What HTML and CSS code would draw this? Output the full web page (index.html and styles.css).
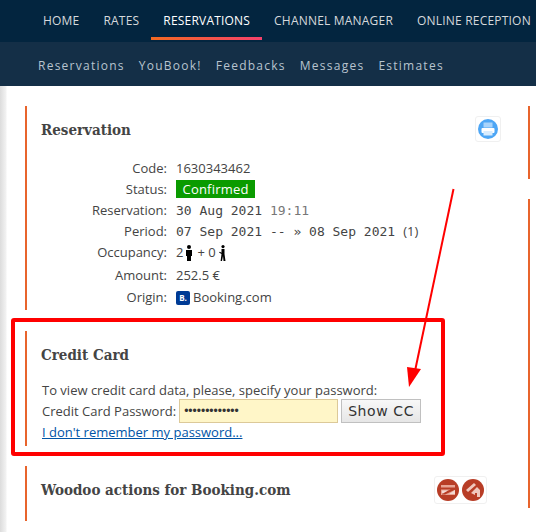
FILE: index.html
```html
<!DOCTYPE html>
<html lang="en">
<head>
    <meta charset="UTF-8">
    <meta name="viewport" content="width=device-width, initial-scale=1.0">
    <title>Reservation</title>
    <link rel="stylesheet" href="styles.css">
</head>
<body>
    <!-- Main menu -->
    <nav class="main-nav">
        <a href="#">HOME</a>
        <a href="#">RATES</a>
        <a href="#" class="active">RESERVATIONS</a>
        <a href="#">CHANNEL MANAGER</a>
        <a href="#">ONLINE RECEPTION</a>
    </nav>
    <nav class="sub-nav">
        <a href="#">Reservations</a>
        <a href="#">YouBook!</a>
        <a href="#">Feedbacks</a>
        <a href="#">Messages</a>
        <a href="#">Estimates</a>
    </nav>

    <div class="content">
        <div class="left-col">
            <section class="panel panel-reservation">
                <div class="panel-head">
                    <h2>Reservation</h2>
                    <span class="icon-box">
                        <svg width="22" height="22" viewBox="0 0 22 22">
                            <circle cx="11" cy="11" r="10" fill="#4da6f5"/>
                            <rect x="6.5" y="4.5" width="9" height="5" fill="#a9d4fb"/>
                            <rect x="4.5" y="10" width="13" height="5" rx="1" fill="#fff"/>
                            <rect x="6.5" y="13" width="9" height="4.5" fill="#d8ecfd"/>
                        </svg>
                    </span>
                </div>
                <div class="details">
                    <span class="label">Code:</span><span>1630343462</span>
                    <span class="label">Status:</span><span><span class="status">Confirmed</span></span>
                    <span class="label">Reservation:</span><span class="mono">30 Aug 2021 <span class="time">19:11</span></span>
                    <span class="label">Period:</span><span><span class="mono">07 Sep 2021 -- » 08 Sep 2021</span><span class="nights">(1)</span></span>
                    <span class="label">Occupancy:</span>
                    <span class="occupancy">2
                        <svg width="8" height="16" viewBox="0 0 8 16"><circle cx="4" cy="2" r="2"/><path d="M1 5h6v6H6v5H2v-5H1z"/></svg>
                        + 0
                        <svg width="8" height="16" viewBox="0 0 8 16"><circle cx="5" cy="1.6" r="1.6"/><path d="M3.5 4h3v5l1 7H5.5L5 11l-1 5H2.6l.9-7L1 7.5l.8-.8 1.7 1z"/></svg>
                    </span>
                    <span class="label row-gap">Amount:</span><span class="row-gap">252.5 €</span>
                    <span class="label row-gap-origin">Origin:</span>
                    <span class="origin"><span class="booking-logo">B.</span>Booking.com</span>
                </div>
            </section>

            <section class="panel panel-card">
                <h2>Credit Card</h2>
                <p>To view credit card data, please, specify your password:</p>
                <form class="cc-form">
                    <label for="cc-pass">Credit Card Password:</label>
                    <input type="password" id="cc-pass" value="1234567890123">
                    <button type="button">Show CC</button>
                </form>
                <a href="#" class="forgot">I don't remember my password...</a>
            </section>

            <section class="panel panel-woodoo">
                <div class="panel-head">
                    <h2>Woodoo actions for Booking.com</h2>
                    <span class="icon-box icon-box-wide">
                        <svg width="22" height="22" viewBox="0 0 22 22">
                            <circle cx="11" cy="11" r="11" fill="#b83d26"/>
                            <path d="M4 6h14v10H4z" fill="#e8a494"/>
                            <path d="M4 8.5h14v2H4zM5 14l10-4h3v.8L8 15.5H5z" fill="#b83d26"/>
                            <path d="M5 11.5h6l-5 3H5zM18 11v4h-6z" fill="#f3d9d2"/>
                        </svg>
                        <svg width="22" height="22" viewBox="0 0 22 22">
                            <circle cx="11" cy="11" r="11" fill="#b83d26"/>
                            <path d="M4 11l8-7 2 2-8 7zM9 14l6-6 3 3v7h-3v-4h-2v2z" fill="#f0c8be"/>
                        </svg>
                    </span>
                </div>
            </section>
        </div>

        <div class="right-col">
            <div class="rule rule-short"></div>
            <div class="rule rule-long"></div>
        </div>

        <!-- Annotations on top of the screenshot -->
        <div class="highlight"></div>
        <svg class="arrow" width="60" height="210" viewBox="0 0 60 210">
            <line x1="47.5" y1="3" x2="9" y2="185" stroke="#f00" stroke-width="2"/>
            <path d="M1 181L15 183L3 201z" fill="#f00"/>
        </svg>
    </div>
</body>
</html>
```

FILE: styles.css
```css
* {
    box-sizing: border-box;
    margin: 0;
    padding: 0;
}
body {
    margin: 0;
    font-family: "Open Sans", sans-serif;
    font-size: 13px;
    color: #444;
    background-color: white;
    overflow: hidden;
}
a {
    text-decoration: none;
}

/* menus */
.main-nav {
    display: flex;
    height: 42px;
    padding-left: 31px;
    background-color: #03253f;
    white-space: nowrap;
}
.main-nav a {
    height: 40px;
    padding: 12px 12px 0;
    font-size: 12px;
    letter-spacing: 0.2px;
    line-height: 17px;
    color: #d6d9dc;
}
.main-nav a.active {
    color: white;
    border-bottom: 3px solid;
    border-image: linear-gradient(to right, #f26a21, #f4416c) 1;
}
.sub-nav {
    display: flex;
    gap: 14px;
    height: 44px;
    padding: 2px 0 0 38px;
    align-items: center;
    background-color: #142f47;
}
.sub-nav a {
    font-size: 12px;
    letter-spacing: 1.25px;
    color: #b8c4cf;
}

/* page */
.content {
    position: relative;
    display: flex;
    height: 446px;
    padding: 20px 0 0 25px;
    background: linear-gradient(to right, #dcdcdc, #f2f2f2 6px, white 7px);
}
.left-col {
    width: 503px;
}
.right-col {
    width: 2px;
}
.rule {
    width: 2px;
    background-color: #e8642c;
}
.rule-short {
    height: 73px;
    margin-bottom: 20px;
}
.rule-long {
    height: 309px;
}
.panel {
    border-left: 2px solid #e8642c;
    padding-left: 14px;
}
.panel h2 {
    font-family: "DejaVu Serif Condensed", "DejaVu Serif", serif;
    font-size: 15px;
    font-weight: bold;
    color: #444;
}
.panel-reservation {
    height: 204px;
    margin-bottom: 21px;
    padding-top: 15px;
}
.panel-card {
    height: 115px;
    margin-bottom: 20px;
    padding-top: 15px;
}
.panel-woodoo {
    height: 55px;
    padding-top: 15px;
}
.panel-head {
    display: flex;
    justify-content: space-between;
    align-items: flex-start;
    padding-right: 27px;
}
.panel-woodoo .panel-head {
    padding-right: 41px;
}
.icon-box {
    display: flex;
    gap: 3px;
    padding: 1px;
    border: 1px solid #f0f0f0;
    border-radius: 3px;
    margin-top: -5px;
}
.icon-box-wide {
    padding: 2px;
}

/* reservation details */
.details {
    display: grid;
    grid-template-columns: 126px 1fr;
    column-gap: 9px;
    grid-auto-rows: 21px;
    margin-top: 16px;
    line-height: 21px;
    white-space: nowrap;
}
.label {
    text-align: right;
}
.mono {
    font-family: "DejaVu Sans Mono", monospace;
    font-size: 13px;
}
.time {
    color: #777;
}
.nights {
    margin-left: 8px;
    font-size: 13px;
}
.status {
    display: inline-block;
    height: 18px;
    padding: 0 6.5px;
    line-height: 18px;
    letter-spacing: 0.2px;
    color: white;
    background-color: #0a9b00;
}
.occupancy {
    display: flex;
    align-items: center;
    gap: 2px;
    color: #444;
}
.occupancy svg {
    margin-right: 2px;
}
.row-gap {
    position: relative;
    top: 2px;
}
.row-gap-origin {
    position: relative;
    top: 3px;
}
.origin {
    display: flex;
    align-items: center;
    gap: 3px;
    position: relative;
    top: 3px;
}
.booking-logo {
    width: 14px;
    height: 14px;
    border-radius: 2px;
    background-color: #003b95;
    color: white;
    font-size: 8px;
    font-weight: bold;
    line-height: 14px;
    text-align: center;
}

/* credit card */
.panel-card p {
    margin: 17px 0 0 1px;
    line-height: 18px;
}
.cc-form {
    display: flex;
    align-items: center;
    height: 24px;
    margin-left: 1px;
}
.cc-form input {
    width: 159px;
    height: 24px;
    margin-left: 3px;
    padding: 0 4px;
    border: 1px solid #dcc999;
    background-color: #fff6c8;
    font-size: 12px;
    color: #333;
}
.cc-form button {
    width: 80px;
    height: 24px;
    margin-left: 3px;
    border: 1px solid #c0c0c0;
    background: linear-gradient(#f8f8f8, #e6e6e6);
    font-family: "DejaVu Sans", sans-serif;
    font-size: 14px;
    letter-spacing: 0.6px;
    color: #333;
}
.forgot {
    display: block;
    margin-left: 1px;
    line-height: 18px;
    color: #0054a6;
    text-decoration: underline;
}

/* annotations */
.highlight {
    position: absolute;
    left: 11px;
    top: 232px;
    width: 434px;
    height: 138px;
    border: 4px solid #f00;
    border-radius: 3px;
}
.arrow {
    position: absolute;
    left: 406px;
    top: 100px;
}
```
